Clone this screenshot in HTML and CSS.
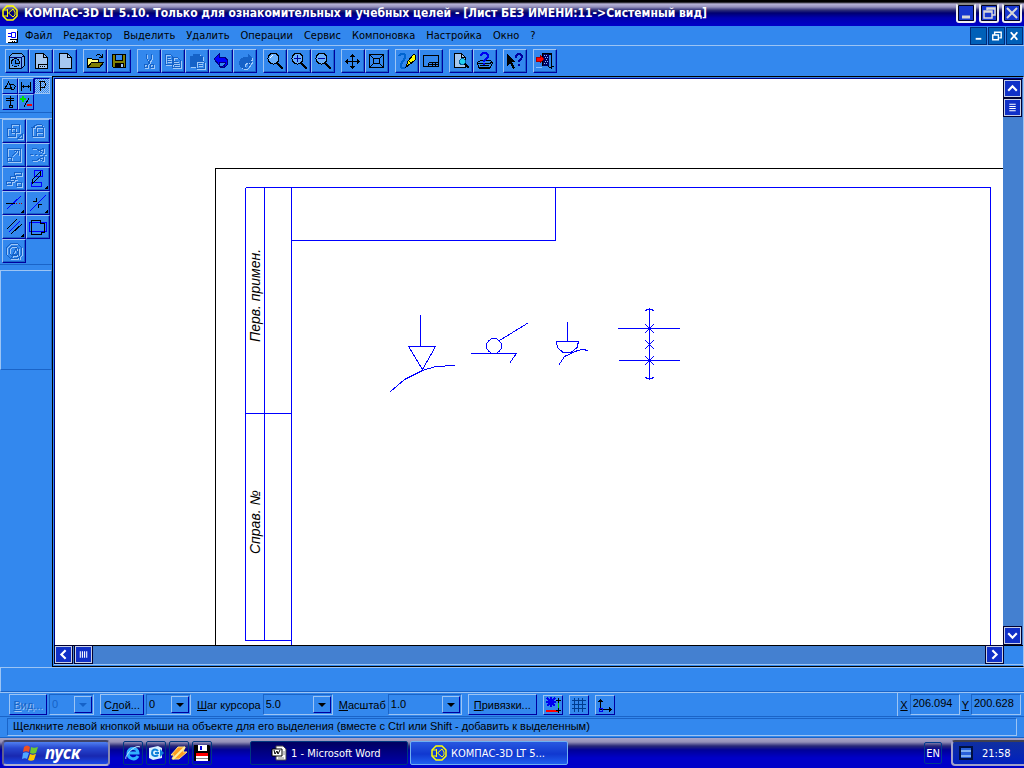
FILE: index.html
```html
<!DOCTYPE html>
<html lang="ru">
<head>
  <meta charset="UTF-8">
  <meta name="viewport" content="width=device-width, initial-scale=1.0">
  <title>КОМПАС-3D LT 5.10</title>
  <link rel="stylesheet" href="styles.css">
</head>
<body>
  <header class="titlebar">
    <svg class="logo" viewBox="0 0 16 16"><path d="M5 1h6l4 4v6l-4 4H5l-4-4V5z" /><path d="M5.500 4v8M11 4L6.500 8l4.500 4M1 5h4M1 11h4M11 4l2 3v3l-2 2" stroke-width="1" /></svg>
    <h1>КОМПАС-3D LT 5.10. Только для ознакомительных и учебных целей - [Лист БЕЗ ИМЕНИ:11-&gt;Системный вид]</h1>
    <div class="win-buttons">
      <button aria-label="Свернуть"><svg viewBox="0 0 16 16"><path d="M4 12h8" stroke-width="3" /></svg></button>
      <button aria-label="Восстановить"><svg viewBox="0 0 16 16"><path d="M6 5V3h8v7h-3M3 6h8v7H3zM3 7h8M6 4h8" stroke-width="1.5" /></svg></button>
      <button aria-label="Закрыть"><svg viewBox="0 0 16 16"><path d="M3 3l10 10M13 3L3 13" stroke-width="2" /></svg></button>
    </div>
  </header>

  <nav class="menubar">
    <svg class="doc-icon" viewBox="0 0 14 16"><path d="M1 1h11v11h-1v3H1z" fill="#fff" /><path d="M3 5.500h3M3 8.500h3M6.500 4.500h4v5h-4z" stroke="#00f" /><path d="M12.500 3v11.500H3M5 11.500h7M7 13.500h1M9 13.500h1" stroke="#000" /></svg>
    <button>Файл</button>
    <button>Редактор</button>
    <button>Выделить</button>
    <button>Удалить</button>
    <button>Операции</button>
    <button>Сервис</button>
    <button>Компоновка</button>
    <button>Настройка</button>
    <button>Окно</button>
    <button>?</button>
    <div class="child-buttons">
      <button aria-label="Свернуть окно"><svg viewBox="0 0 16 16"><path d="M5 11h6" stroke-width="2" /></svg></button>
      <button aria-label="Восстановить окно"><svg viewBox="0 0 16 16"><path d="M6 6V4h7v6h-2M4 7h6v5H4zM6 4h7" stroke-width="1.5" /></svg></button>
      <button aria-label="Закрыть окно"><svg viewBox="0 0 16 16"><path d="M4 4l7 8M11 4l-7 8" stroke-width="2" /></svg></button>
    </div>
  </nav>

  <div class="toolbar">
    <div class="group">
      <button class="tool" aria-label="Новая деталь"><svg viewBox="0 0 22 22"><path d="M3.500 6.500l3-3h9l3 3v9l-3 3h-12z" fill="#69a8f0" stroke="#000" /><path d="M4 7.500h11.500V19M15.500 7.500l3-2" stroke="#000060" /><circle cx="9.500" cy="12.500" r="4" fill="#3388ee" stroke="#000" /><path d="M9.500 10v3h3" stroke="#000" /></svg></button>
      <button class="tool" aria-label="Новый фрагмент"><svg viewBox="0 0 22 22"><path d="M5.500 3.500h8l4 4v11h-12z" fill="#a6c8f0" stroke="#000" /><path d="M13.500 3.500v4h4M8.500 18.500v-4h9M10 16.500h1M12 16.500h1M14 16.500h1" stroke="#000" /></svg></button>
      <button class="tool" aria-label="Новый лист"><svg viewBox="0 0 22 22"><path d="M5.500 3.500h8l4 4v11h-12z" fill="#a6c8f0" stroke="#000" /><path d="M13.500 3.500v4h4" stroke="#000" /></svg></button>
    </div>
    <div class="group">
      <button class="tool" aria-label="Открыть"><svg viewBox="0 0 22 22"><path d="M3.500 17.500v-9h4l1 1h6v3" fill="#ffff80" stroke="#000" /><path d="M3.500 17.500l4-5h12l-4 5z" fill="#808000" stroke="#000" /><path d="M11.500 6.500l2-2h2l3 3M18.500 4v3.500H15" stroke="#000" /></svg></button>
      <button class="tool" aria-label="Сохранить"><svg viewBox="0 0 22 22"><path d="M4.500 4.500h13v13h-12l-1-1z" fill="#808000" stroke="#000" /><path d="M7.500 4.500h7v6h-7z" fill="#3388ee" stroke="#000" /><path d="M7 13h9v5H7z" fill="#000" /><path d="M13 14h2v3h-2z" fill="#a6c8f0" /></svg></button>
    </div>
    <div class="group">
      <button class="tool off" aria-label="Вырезать" disabled><svg viewBox="0 0 22 22"><path d="M8.500 4v4l4 7M13.500 4v4l-4 7" /><circle cx="8" cy="16" r="2" /><circle cx="14" cy="16" r="2" /></svg></button>
      <button class="tool off" aria-label="Копировать" disabled><svg viewBox="0 0 22 22"><path d="M3.500 4.500h5l3 3v7h-8zM10.500 7.500h5l3 3v7h-8zM5 7.500h3M5 9.500h4M5 11.500h4M12 11.500h4M12 13.500h5M12 15.500h5" /></svg></button>
      <button class="tool off" aria-label="Вставить" disabled><svg viewBox="0 0 22 22"><path d="M4 6h3l1-2h5l1 2h2v5h-6v5H4z" fill="#1562c8" /><path d="M10.500 10.500h6l2 2v6h-8zM12 13.500h4M12 15.500h4" /></svg></button>
      <button class="tool" aria-label="Отменить"><svg viewBox="0 0 22 22"><path d="M4 9l5-5v3h5c6 3 5 9-2 11l-3-2h4c3-1 3-4 1-4H9v3z" fill="#0000ff" stroke="#000080" /></svg></button>
      <button class="tool off" aria-label="Повторить" disabled><svg viewBox="0 0 22 22"><path d="M18 8l-4-4v3h-3c-7 3-7 8-2 11h3c-3-3-2-5 2-6v3z" fill="#1562c8" /><path d="M14 17l4-6M13 18l3-3" /></svg></button>
    </div>
    <div class="group">
      <button class="tool" aria-label="Увеличить рамкой"><svg viewBox="0 0 22 22"><circle cx="9.500" cy="8.500" r="5.500" fill="#69b0fc" stroke="#000" /><path d="M13 13l6 6" stroke="#000" stroke-width="2" /><path d="M6 8l3-3" stroke="#fff" /></svg></button>
      <button class="tool" aria-label="Увеличить"><svg viewBox="0 0 22 22"><circle cx="9.500" cy="8.500" r="5.500" fill="#69b0fc" stroke="#000" /><path d="M13 13l6 6" stroke="#000" stroke-width="2" /><path d="M6 8.500h7M9.500 5v7" stroke="#0000a0" /></svg></button>
      <button class="tool" aria-label="Уменьшить"><svg viewBox="0 0 22 22"><circle cx="9.500" cy="8.500" r="5.500" fill="#69b0fc" stroke="#000" /><path d="M13 13l6 6" stroke="#000" stroke-width="2" /><path d="M6 8.500h7" stroke="#0000a0" /></svg></button>
    </div>
    <div class="group">
      <button class="tool" aria-label="Сдвинуть"><svg viewBox="0 0 22 22"><path d="M10.500 4v15M3 11.500h15M8 6.500h5M9 5.500h3M8 16.500h5M9 17.500h3M5.500 9v5M4.500 10v3M15.500 9v5M16.500 10v3" stroke="#000" /></svg></button>
      <button class="tool" aria-label="Показать все"><svg viewBox="0 0 22 22"><path d="M3.500 4.500h14v13h-14zM7.500 8.500h6v5h-6zM3.500 4.500l4 4M17.500 4.500l-4 4M3.500 17.500l4-4M17.500 17.500l-4-4" stroke="#000" /></svg></button>
    </div>
    <div class="group">
      <button class="tool" aria-label="Обновить изображение"><svg viewBox="0 0 22 22"><path d="M3 6c3-4 8-2 6 2l-4 6c-1 4 2 5 5 3" stroke="#0064d0" stroke-width="2" /><path d="M10 17l2-6 6-7 1 1v5l-6 5z" fill="#ff0" stroke="#000" /><path d="M10 17l3-3M13 11l2 2" stroke="#000" /></svg></button>
      <button class="tool" aria-label="Параметры листа"><svg viewBox="0 0 22 22"><path d="M3.500 5.500h15v11h-15zM8.500 12.500h10M8.500 12.500v4M12.500 12.500v4M15.500 12.500v4M8.500 14.500h10" stroke="#000" /></svg></button>
    </div>
    <div class="group">
      <button class="tool" aria-label="Предварительный просмотр"><svg viewBox="0 0 22 22"><path d="M4.500 3.500h7l4 4v10h-11z" fill="#a6c8f0" stroke="#000" /><path d="M11.500 3.500v4h4" stroke="#000" /><circle cx="12.500" cy="11.500" r="3" fill="#20d0f0" stroke="#0060a0" /><path d="M15 14l4 4" stroke="#000" stroke-width="2" /></svg></button>
      <button class="tool" aria-label="Печать"><svg viewBox="0 0 22 22"><path d="M3.500 12.500l3-2h10l2 2-2 5h-12z" fill="#3388ee" stroke="#000" /><path d="M4 13.500h12l2-2M6 15.500h9M5 18.500h11" stroke="#000" /><path d="M7 6c0-4 7-4 7 0 0 3-4 3-4 6M10 13v2" stroke="#0000f0" stroke-width="2" /></svg></button>
    </div>
    <div class="group">
      <button class="tool" aria-label="Справка"><svg viewBox="0 0 22 22"><path d="M3 4v12l3-3 3 6 2-1-3-6h4z" fill="#000" /><path d="M12 8c0-5 6-5 6-1 0 2-3 2-3 5M15 14v2" stroke="#0000a0" stroke-width="2" /></svg></button>
    </div>
    <div class="group">
      <button class="tool" aria-label="Выход"><svg viewBox="0 0 22 22"><path d="M8.500 16V3.500h9v13h2M14.500 5.500l3-2v15l-3-2z" fill="#3388ee" stroke="#000" /><path d="M9 4h6v12H9z" fill="#000060" /><path d="M10 5.500h1M12 5.500h1M11 7.500h1M13 7.500h1M12 9.500h1M11 11.500h1M13 11.500h1M10 13.500h1M12 13.500h1M2 17.500h6" stroke="#8ac0ff" /><path d="M2 7h4V5l4 4-4 4v-2H2z" fill="red" stroke="#a00000" /></svg></button>
    </div>
  </div>

  <main class="workspace">
    <aside class="side">
      <div class="modes">
        <button class="mode" aria-label="Геометрия"><svg viewBox="0 0 14 14"><path d="M2 9.500L5.500 3l3 6.500zM6.500 5.500h4l2 2-2 3h-3" /></svg></button>
        <button class="mode" aria-label="Размеры"><svg viewBox="0 0 14 14"><path d="M2.500 3v9M11.500 3v9M2 7.500h10M4.500 6v3M9.500 6v3" /></svg></button>
        <button class="mode pressed" aria-label="Редактирование"><svg viewBox="0 0 14 14"><path d="M4 2.500h5l1.500 2v2l-1.500 2H5.500M5.500 2.500V12" /></svg></button>
        <button class="mode" aria-label="Измерения"><svg viewBox="0 0 14 14"><path d="M3 3.500h8M7.500 1v10M3 5.500h8M6 10.500h3v2H6z" /></svg></button>
        <button class="mode" aria-label="Выделение"><svg viewBox="0 0 14 14"><path d="M5 12l5-9" /><path d="M1 4h6M4 1v6" stroke="#00e000" stroke-width="2" /><path d="M8 10h5" stroke="red" stroke-width="2" /></svg></button>
      </div>
      <div class="palette">
        <button class="tool off" aria-label="Сдвиг" disabled><svg viewBox="0 0 22 22"><path d="M4.500 8.500h8v8h-8zM8.500 4.500h8v8h-8zM15 18l4-4v4z" /></svg></button>
        <button class="tool off" aria-label="Поворот" disabled><svg viewBox="0 0 22 22"><path d="M5.500 16.500v-9l4-3h5l2 3v9h-7v-9h7M5.500 16.500h4M9.500 12.500h7M4 7.500h4" /></svg></button>
        <button class="tool off" aria-label="Масштабирование" disabled><svg viewBox="0 0 22 22"><path d="M4.500 4.500h13v13h-13zM4.500 13.500h4v4M9 12l6-6M11 6.500h4.500V11" /></svg></button>
        <button class="tool off" aria-label="Симметрия" disabled><svg viewBox="0 0 22 22"><path d="M3 10.500h3M8 10.500h2M12 10.500h3M17 10.500h2M5 4.500h4l7 4v-4l-4 2M5 16.500h4l7-4v4l-4-2" /></svg></button>
        <button class="tool off" aria-label="Копия" disabled><svg viewBox="0 0 22 22"><path d="M11.500 4.500h7v3h-7zM7.500 8.500h5v3h-5zM3.500 13.500h5v3h-5zM13.500 14.500h5v4h-5zM9 14l5-3" /></svg></button>
        <button class="tool" aria-label="Деформация"><svg viewBox="0 0 22 22"><path d="M7.500 2.500h8v6h-8zM4.500 14.500h10v4h-10z" stroke="#0000ff" /><path d="M5.500 15.500v-4l8-8v4z" stroke="#000" /><path d="M21 17v4h-4z" fill="#000" /></svg></button>
        <button class="tool" aria-label="Усечь кривую"><svg viewBox="0 0 22 22"><path d="M4 17L18 4" stroke="#0000ff" /><path d="M3 11.500h9" stroke="#000" /><path d="M13 11.500h1M16 11.500h1M18 11.500h1" stroke="#b00000" /><path d="M21 17v4h-4z" fill="#000" /></svg></button>
        <button class="tool" aria-label="Разбить кривую"><svg viewBox="0 0 22 22"><path d="M3 19L19 3" stroke="#0000ff" /><path d="M6 9.500h3.500V6M11.500 16v-3.500H15" stroke="#000" /><path d="M21 17v4h-4z" fill="#000" /></svg></button>
        <button class="tool" aria-label="Эквидистанта"><svg viewBox="0 0 22 22"><path d="M4 13L14 3M8 18L19 8" stroke="#000" /><path d="M6 16L17 5" stroke="#0000ff" /><path d="M21 17v4h-4z" fill="#000" /></svg></button>
        <button class="tool" aria-label="Собрать контур"><svg viewBox="0 0 22 22"><path d="M2.500 6.500h17v9h-17z" stroke="#0000ff" /><path d="M4.500 6.500V4.500h9v3h4v9h-3v2h-10z" stroke="#000" /></svg></button>
        <button class="tool off" aria-label="Преобразовать" disabled><svg viewBox="0 0 22 22"><circle cx="11" cy="11" r="8" /><circle cx="11" cy="11" r="5" /><path d="M8 19l5-11 4 11M10 14h5" /></svg></button>
      </div>
      <div class="side-empty"></div>
    </aside>

    <section class="document">
      <div class="view-row">
        <svg class="sheet">
          <!-- sheet coordinates start at the window corner -->
          <g transform="translate(-55 -79)" fill="none" stroke="#0000ff">
            <path d="M215.500 700V168.500H1100" stroke="#000" />
            <path d="M245.500 187.500H990.500V700M245.500 187.500V640.500H291.500M264.500 187.500V640.500M291.500 187.500V700M245.500 413.500H291.500M291.500 240.500H555.500V187.500" />
            <path d="M420.500 315V346M408.500 346.500H435.500L422.500 369.500zM390.500 391.500L404.500 379.500 422.500 370.500 435.500 366.500 455 365.500" />
            <circle cx="494" cy="346" r="7.500" />
            <path d="M499.500 340.500L528 323M471 353.500H516.500L510 362.500" />
            <path d="M567.500 322V341M556.500 341.500H578.500L577 347.500 571 352.500H563L557.500 347.500zM558.500 365.500L564.500 356.500 577.500 350.500 583 349.500 588 350.500" />
            <path d="M649.500 308V380M618 328.500H680M619 360.500H680M645 310.500L648 309.500H651L654 310.500M645 377.500L648 378.500H651L654 377.500M645 324L654 333M654 324L645 333M645 340L654 349M654 340L645 349M645 356L654 365M654 356L645 365" />
          </g>
          <g class="stamp-text" transform="translate(-55 -79)">
            <text transform="translate(260 342) rotate(-90)">Перв. примен.</text>
            <text transform="translate(260 554) rotate(-90)">Справ. №</text>
          </g>
        </svg>
        <div class="vscroll">
          <button class="sb" aria-label="Вверх"><svg viewBox="0 0 14 14"><path d="M3 9l4-4 4 4" /></svg></button>
          <div class="sb"><svg viewBox="0 0 14 14"><path d="M4 4h6M4 6h6M4 8h6M4 10h6" stroke-width="1" /></svg></div>
          <button class="sb end" aria-label="Вниз"><svg viewBox="0 0 14 14"><path d="M3 5l4 4 4-4" /></svg></button>
        </div>
      </div>
      <div class="scroll-row">
        <div class="hscroll">
          <button class="sb" aria-label="Влево"><svg viewBox="0 0 14 14"><path d="M9 3L5 7l4 4" /></svg></button>
          <div class="sb"><svg viewBox="0 0 14 14"><path d="M4 4v6M6 4v6M8 4v6M10 4v6" stroke-width="1" /></svg></div>
          <button class="sb end" aria-label="Вправо"><svg viewBox="0 0 14 14"><path d="M5 3l4 4-4 4" /></svg></button>
        </div>
      </div>
    </section>
  </main>

  <div class="params"></div>

  <div class="state">
    <button class="btn off" disabled><u>В</u>ид...</button>
    <div class="combo off"><select aria-label="Вид" disabled><option>0</option></select><span class="arrow"></span></div>
    <button class="btn layer">С<u>л</u>ой...</button>
    <div class="combo"><select aria-label="Слой"><option>0</option></select><span class="arrow"></span></div>
    <label for="step"><u>Ш</u>аг курсора</label>
    <div class="combo step"><select id="step"><option>5.0</option></select><span class="arrow"></span></div>
    <label for="scale"><u>М</u>асштаб</label>
    <div class="combo scale"><select id="scale"><option>1.0</option></select><span class="arrow"></span></div>
    <button class="btn snap"><u>П</u>ривязки...</button>
    <button class="small" aria-label="Запретить привязки"><svg viewBox="0 0 18 18"><path d="M2 6h10M7 1v10M3 2l8 8M11 2l-8 8" stroke="#0000f0" stroke-width="2" /><path d="M2 15h12" stroke="red" stroke-width="2" /><path d="M12 4.500h5M14.500 2v5M12 14.500h5M14.500 12v5" stroke="#000" /><path d="M14.500 7v5" stroke="#00d000" /></svg></button>
    <button class="small" aria-label="Сетка"><svg viewBox="0 0 18 18"><path d="M2 4.500h14M2 8.500h14M2 12.500h14M4.500 2v14M8.500 2v14M12.500 2v14" stroke="#003c90" /></svg></button>
    <button class="small" aria-label="Локальная система координат"><svg viewBox="0 0 18 18"><path d="M4.500 3v10.500H16M2 5.500h5M3 4.500h3M13.500 11v5M14.500 12v3" stroke="#000" /><path d="M3.500 12.500h3v3h-3z" stroke="#0000f0" /></svg></button>
    <div class="coords">
      <label for="x"><u>X</u></label><input id="x" type="text" value="206.094">
      <label for="y"><u>Y</u></label><input id="y" type="text" value="200.628">
    </div>
  </div>

  <div class="hint"><p>Щелкните левой кнопкой мыши на объекте для его выделения (вместе с Ctrl или Shift - добавить к выделенным)</p></div>

  <footer class="taskbar">
    <button class="start">
      <svg viewBox="0 0 18 18"><path d="M3 3c2-2 4-2 6 0L8 8c-2-1-4-1-6 0z" fill="#f05020" /><path d="M10 3c2 1 4 1 7 0l-2 6c-2 1-4 1-6 0z" fill="#70c830" /><path d="M2 9c2-1 4-1 6 0l-2 6c-1-1-3-1-5 0z" fill="#50a8ff" /><path d="M9 10c2 1 3 1 6 0l-2 6c-2 1-4 1-6 0z" fill="#ffc800" /></svg>
      пуск
    </button>
    <div class="quick">
      <button aria-label="Internet Explorer"><svg viewBox="0 0 18 18"><path d="M14 12c-3 5-10 3-10-3s10-6 10 0H5" stroke="#30b0ff" stroke-width="3" /><path d="M2 15C0 13 10 0 16 3" stroke="#c8ecff" /></svg></button>
      <button aria-label="Outlook Express"><svg viewBox="0 0 18 18"><path d="M2 4l9-2 4 2v10l-9 2-4-2z" fill="#d8f0ff" /><path d="M11 7c-3-3-6-1-6 2s4 4 6 2M8 9h4" stroke="#1080d8" stroke-width="2" /><path d="M13 5l4 4-4 4z" fill="#1080d8" /></svg></button>
      <button aria-label="Winamp"><svg viewBox="0 0 18 18"><path d="M8 3h7l-2 5h4L9 15H2l2-4H1z" fill="#ff9c20" stroke="#ffe080" /><path d="M3 15L15 3" stroke="#fff0a0" stroke-width="2" /></svg></button>
      <button aria-label="Дискета"><svg viewBox="0 0 18 18"><path d="M1 1h15l1 1v15H1z" fill="#000" /><path d="M5 1h9v6H5z" fill="#fff" /><path d="M7 2h2v4H7z" fill="#0000d8" /><path d="M3 9h12v8H3z" fill="#fff" /><path d="M3 9h12v3H3z" fill="red" /><path d="M3 14.500h12" stroke="#888" /></svg></button>
    </div>
    <button class="task">
      <svg viewBox="0 0 16 16"><path d="M5 1h7l3 3v11H5z" fill="#fff" stroke="#444" /><path d="M1 4h10v7H1z" fill="#fff" stroke="#000" /><path d="M3 5l1 4 2-3 1 3 2-4" stroke="#000" /><path d="M7 13h6M12 7h2M12 9h2" stroke="#888" /></svg>
      1 - Microsoft Word
    </button>
    <button class="task active">
      <svg class="logo" viewBox="0 0 16 16"><path d="M5 1h6l4 4v6l-4 4H5l-4-4V5z" /><path d="M5.500 4v8M11 4L6.500 8l4.500 4M1 5h4M1 11h4M11 4l2 3v3l-2 2" stroke-width="1" /></svg>
      КОМПАС-3D LT 5...
    </button>
    <button class="lang">EN</button>
    <div class="tray">
      <svg viewBox="0 0 14 14"><path d="M1 1h12v12H1z" fill="#2860d8" stroke="#001040" stroke-width="2" /><path d="M2 5h10M2 10h10" stroke="#80b0f0" stroke-width="2" /></svg>
      <time>21:58</time>
    </div>
  </footer>
</body>
</html>
```

FILE: styles.css
```css
* {
  box-sizing: border-box;
}
body {
  margin: 0;
  height: 100vh;
  display: flex;
  flex-direction: column;
  overflow: hidden;
  background-color: #3388ee;
  color: #000;
  font-family: "Liberation Sans", Arial, sans-serif;
  font-size: 11px;
}
button, select, input {
  font: inherit;
  color: inherit;
  margin: 0;
  padding: 0;
  border: none;
  border-radius: 0;
  background: none;
}
svg {
  display: block;
  fill: none;
}
.logo {
  width: 16px;
  height: 16px;
  stroke: #ffff00;
  stroke-width: 1.5;
}

/* title */
.titlebar {
  display: flex;
  align-items: center;
  height: 26px;
  flex: none;
  padding: 0 2px;
  background: linear-gradient(#000 0, #000 2px, #b8b4d8 4px, #9490bc 7px, #303078 10px, #000070 13px, #0000b0 18px, #0000c8 26px);
}
.titlebar h1 {
  flex: 1;
  margin: 0 0 0 6px;
  font-family: "DejaVu Sans Condensed", "DejaVu Sans", sans-serif;
  font-size: 12px;
  line-height: 20px;
  font-weight: bold;
  color: #fff;
  white-space: nowrap;
}
.win-buttons {
  display: flex;
  gap: 3px;
}
.win-buttons button {
  width: 20px;
  height: 20px;
  border: 2px solid #f0f0f0;
  border-top-color: #888;
  border-radius: 3px;
  background-color: #1838d0;
  box-shadow: inset 0 0 0 1px #000020;
}
.win-buttons svg {
  width: 16px;
  height: 16px;
  stroke: #d8d8d8;
}

/* menu */
.menubar {
  display: flex;
  align-items: center;
  gap: 11px;
  height: 20px;
  flex: none;
  padding: 0 1px 0 5px;
  font-family: "DejaVu Sans Condensed", "DejaVu Sans", sans-serif;
  border-bottom: 1px solid #9cc4f4;
}
.doc-icon {
  width: 14px;
  height: 16px;
  margin-right: -5px;
}
.child-buttons {
  display: flex;
  gap: 1px;
  margin-left: auto;
}
.child-buttons button {
  width: 17px;
  height: 18px;
  border: 1px solid #002c78;
  background-color: #0060b8;
}
.child-buttons svg {
  width: 15px;
  height: 16px;
  stroke: #fff;
}

/* toolbar */
.toolbar {
  display: flex;
  gap: 6px;
  height: 30px;
  flex: none;
  padding: 3px 5px;
}
.group {
  display: flex;
}
.tool {
  width: 24px;
  height: 24px;
  border: 1px solid #9cc4f4;
  border-right-color: #0000a0;
  border-bottom-color: #0000a0;
  box-shadow: inset -1px -1px #1a64c8;
}
.tool svg {
  width: 22px;
  height: 22px;
  shape-rendering: crispEdges;
}
.tool.off svg {
  stroke: #1562c8;
  filter: drop-shadow(1px 1px 0 #a0c8f8);
}

/* workspace */
.workspace {
  display: flex;
  flex: 1;
  min-height: 0;
}
.side {
  width: 52px;
  flex: none;
  padding-top: 1px;
  border-top: 1px solid #9cc4f4;
}
.modes {
  display: flex;
  flex-wrap: wrap;
  align-content: flex-start;
  height: 35px;
  padding-left: 2px;
  border-bottom: 1px solid #1a64c8;
}
.mode {
  width: 16px;
  height: 16px;
  border: 1px solid #9cc4f4;
  border-right-color: #0000a0;
  border-bottom-color: #0000a0;
}
.mode svg {
  width: 14px;
  height: 14px;
  stroke: #000;
  shape-rendering: crispEdges;
}
.mode.pressed {
  background: repeating-conic-gradient(#9cc4f4 0 25%, #3388ee 0 50%) 0 0 / 2px 2px;
  border-color: #0000a0 #9cc4f4 #9cc4f4 #0000a0;
}
.palette {
  display: flex;
  flex-wrap: wrap;
  margin-top: 5px;
  padding-left: 2px;
  padding-bottom: 1px;
  border-top: 1px solid #9cc4f4;
  border-bottom: 1px solid #1a64c8;
}
.side-empty {
  height: 100px;
  margin-top: 5px;
  border: 1px solid #9cc4f4;
  border-right-color: #1a64c8;
  border-bottom-color: #1a64c8;
}
.document {
  display: flex;
  flex-direction: column;
  flex: 1;
  min-width: 0;
  border: 1px solid #000;
  border-right: 1px solid #9cc4f4;
  background-color: #3388ee;
  padding: 1px 0 1px 1px;
}
.view-row {
  display: flex;
  flex: 1;
  min-height: 0;
  border-top: 1px solid #000080;
  border-left: 1px solid #000080;
}
.sheet {
  flex: 1;
  min-width: 0;
  height: 100%;
  background-color: #fff;
  shape-rendering: crispEdges;
}
.stamp-text {
  fill: #000;
  font-size: 14px;
  font-style: italic;
}
.vscroll {
  display: flex;
  flex-direction: column;
  width: 20px;
  padding: 1px;
  background-color: #4480d0;
}
.scroll-row {
  height: 20px;
  flex: none;
  padding-right: 19px;
  border-top: 1px solid #000;
  border-bottom: 1px solid #9cc4f4;
}
.hscroll {
  display: flex;
  height: 100%;
  padding: 0 1px;
  background-color: #4480d0;
}
.sb {
  width: 17px;
  height: 17px;
  border: 1px solid #c8d0e8;
  outline: 1px solid #000030;
  background-color: #1030c8;
}
.sb svg {
  width: 15px;
  height: 15px;
  stroke: #fff;
  stroke-width: 2;
}
.vscroll .sb + .sb {
  margin-top: 2px;
}
.hscroll .sb + .sb {
  margin-left: 3px;
}
.vscroll .sb.end {
  margin-top: auto;
}
.hscroll .sb.end {
  margin-left: auto;
}

/* bottom bars */
.params {
  height: 25px;
  flex: none;
  border: 1px solid #9cc4f4;
  border-right: none;
  border-bottom-color: #1a64c8;
}
.state {
  display: flex;
  align-items: center;
  height: 25px;
  flex: none;
  padding-left: 9px;
  border-top: 1px solid #9cc4f4;
  border-bottom: 1px solid #1a64c8;
}
.btn {
  width: 38px;
  height: 21px;
  flex: none;
  border: 1px solid #9cc4f4;
  border-right-color: #0000a0;
  border-bottom-color: #0000a0;
}
.btn.layer {
  width: 44px;
  margin-left: 6px;
}
.btn.snap {
  width: 69px;
  margin-left: 6px;
}
.state .off {
  color: #1562c8;
}
.btn.off {
  text-shadow: 1px 1px #9cc4f4;
}
.combo {
  position: relative;
  width: 45px;
  height: 21px;
  flex: none;
  margin-left: 2px;
  border: 1px solid #1a64c8;
  border-right-color: #9cc4f4;
  border-bottom-color: #9cc4f4;
}
.combo.step {
  width: 70px;
}
.combo.scale {
  width: 74px;
}
.combo select {
  appearance: none;
  width: 100%;
  height: 17px;
  padding-left: 2px;
  opacity: 1;
}
.arrow {
  position: absolute;
  top: 1px;
  right: 1px;
  width: 18px;
  height: 17px;
  border: 1px solid #9cc4f4;
  border-right-color: #0000a0;
  border-bottom-color: #0000a0;
  pointer-events: none;
}
.arrow::after {
  content: "";
  display: block;
  width: 0;
  margin: 6px auto 0;
  border: 4px solid transparent;
  border-top-color: currentColor;
  border-bottom: none;
}
.state > label {
  flex: none;
  margin-left: 6px;
}
.small {
  width: 20px;
  height: 20px;
  flex: none;
  margin-left: 6px;
  border: 1px solid #9cc4f4;
  border-right-color: #0000a0;
  border-bottom-color: #0000a0;
}
.small svg {
  width: 18px;
  height: 18px;
  shape-rendering: crispEdges;
}
.coords {
  display: flex;
  align-items: center;
  gap: 2px;
  height: 100%;
  margin-left: auto;
  padding: 0 3px 0 2px;
  border-left: 1px solid #9cc4f4;
}
.coords input {
  width: 50px;
  height: 21px;
  padding: 0 2px 3px;
  border: 1px solid #1a64c8;
  border-right-color: #9cc4f4;
  border-bottom-color: #9cc4f4;
}
.hint {
  height: 21px;
  flex: none;
  padding: 1px 7px;
  border-bottom: 1px solid #1a64c8;
}
.hint p {
  margin: 0;
  height: 18px;
  padding-left: 5px;
  line-height: 15px;
  border: 1px solid #1a64c8;
  border-right-color: #9cc4f4;
  border-bottom-color: #9cc4f4;
  white-space: nowrap;
}

/* taskbar */
.taskbar {
  display: flex;
  align-items: center;
  height: 30px;
  flex: none;
  padding-left: 2px;
  font-family: "DejaVu Sans Condensed", "DejaVu Sans", sans-serif;
  color: #fff;
  background: linear-gradient(#a8a4c8 0, #9490b8 4px, #282878 8px, #000098 12px, #0000c8 20px);
}
.start {
  display: flex;
  align-items: center;
  gap: 6px;
  width: 108px;
  height: 26px;
  padding-left: 17px;
  border: 2px solid;
  border-color: #404468 #8888b0 #b0b0d0 #606090;
  border-radius: 4px;
  background: linear-gradient(#5080f0, #2848d0 6px, #1828b0 14px, #1848e8);
  font-family: "Noto Sans", sans-serif;
  font-size: 17px;
  line-height: 20px;
  font-weight: bold;
  font-style: italic;
}
.start svg {
  width: 18px;
  height: 18px;
}
.quick {
  display: flex;
  gap: 3px;
  margin-left: 13px;
}
.quick button {
  width: 20px;
  height: 24px;
  border: 1px solid #003880;
  border-radius: 2px;
}
.quick svg {
  width: 18px;
  height: 18px;
}
.task {
  display: flex;
  align-items: center;
  gap: 4px;
  width: 158px;
  height: 24px;
  padding-left: 20px;
  border: 1px solid #003880;
  border-radius: 2px;
  background: linear-gradient(#000060, #0000a8);
  white-space: nowrap;
}
.task svg {
  width: 16px;
  height: 16px;
  flex: none;
}
.quick + .task {
  margin-left: 38px;
}
.task.active {
  margin-left: 2px;
  border-color: #70b0f0;
  background: linear-gradient(#2858e0, #1038d0 12px, #2060f0);
}
.lang {
  width: 18px;
  height: 22px;
  margin-left: auto;
  border: 1px solid #003c90;
  border-radius: 2px;
}
.tray {
  display: flex;
  align-items: center;
  gap: 9px;
  width: 73px;
  height: 26px;
  margin-left: 9px;
  padding-left: 6px;
  border: 2px solid #a0a0c8;
  border-top-color: #404050;
  border-right: none;
  border-radius: 4px 0 0 4px;
  background: linear-gradient(#1030a0, #0020c0);
}
.tray svg {
  width: 14px;
  height: 14px;
}
```
